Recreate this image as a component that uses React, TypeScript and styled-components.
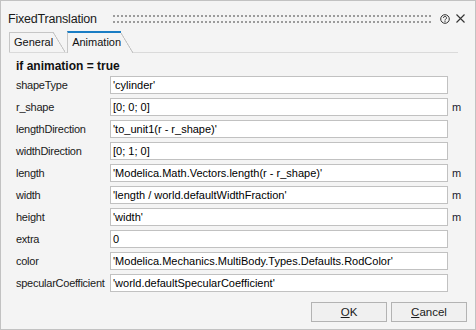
import React from 'react';
import styled, { createGlobalStyle } from 'styled-components';

const GlobalStyle = createGlobalStyle`
  html, body {
    margin: 0;
    padding: 0;
    background: #f4f4f4;
  }
  body {
    font-family: "Liberation Sans", Arial, sans-serif;
  }
`;

const PAGE_BG = '#f4f4f4';
const LINE = '#c6c6c6';

// Dialog frame
const Window = styled.div`
  width: 476px;
  height: 330px;
  box-sizing: border-box;
  border: 1px solid #c2c2c2;
  background: ${PAGE_BG};
  display: flex;
  flex-direction: column;
  color: #1a1a1a;
  font-family: "Liberation Sans", Arial, sans-serif;
`;

/* Title bar */
const TitleBar = styled.div`
  height: 30px;
  box-sizing: border-box;
  display: flex;
  align-items: flex-start;
  padding: 11px 10px 0 7px;
`;

const Title = styled.div`
  font-size: 12.5px;
  line-height: 14px;
  letter-spacing: -0.2px;
  white-space: nowrap;
`;

const Grip = styled.div`
  flex: 1;
  height: 8px;
  margin: 3px 9px 0 16px;
  background-image: conic-gradient(from 270deg at 2px 2px, #9c9c9c 25%, transparent 0);
  background-size: 4px 6px;
`;

const IconButton = styled.div<{ $gap?: number }>`
  display: flex;
  margin-top: 2px;
  margin-left: ${(p) => p.$gap ?? 0}px;
  color: #333;
`;

/* Tabs */
const TabStrip = styled.div`
  height: 21px;
  display: flex;
  align-items: flex-end;
  margin: 0 17px 0 8px;
  border-bottom: 1px solid #dadada;
`;

const Tab = styled.div<{ $active?: boolean }>`
  position: relative;
  box-sizing: border-box;
  height: ${(p) => (p.$active ? 22 : 20)}px;
  margin-bottom: ${(p) => (p.$active ? -1 : 0)}px;
  margin-right: 14px;
  padding: 0 0 ${(p) => (p.$active ? 1 : 0)}px 4px;
  display: flex;
  align-items: center;
  font-size: 11px;
  line-height: 13px;
  color: #111;
  background: ${PAGE_BG};
  border-left: 1px solid ${LINE};
  border-top: ${(p) => (p.$active ? '2px solid #1a7dc4' : `1px solid ${LINE}`)};

  &::after {
    content: '';
    position: absolute;
    left: 100%;
    top: ${(p) => (p.$active ? 0 : -1)}px;
    bottom: 0;
    width: 12px;
    background: linear-gradient(
      to bottom left,
      transparent calc(50% - 0.7px),
      ${LINE} calc(50% - 0.3px),
      ${LINE} calc(50% + 0.3px),
      ${PAGE_BG} calc(50% + 0.7px)
    );
  }
`;

/* Tab page */
const Page = styled.div`
  flex: 1;
  padding: 6px 0 0 15px;
`;

const Heading = styled.div`
  font-size: 12px;
  line-height: 14px;
  font-weight: bold;
  color: #111;
  margin-bottom: 3px;
`;

const Grid = styled.div`
  display: grid;
  grid-template-columns: 94px 338px auto;
  row-gap: 4px;
  align-items: center;
`;

const Label = styled.div`
  font-size: 11px;
  line-height: 18px;
  letter-spacing: -0.25px;
  white-space: nowrap;
`;

const Field = styled.input`
  height: 18px;
  box-sizing: border-box;
  margin: 0;
  padding: 0 2px;
  border: 1px solid #c1c1c1;
  border-radius: 0;
  background: #fff;
  font-family: "Liberation Sans", Arial, sans-serif;
  font-size: 11px;
  color: #000;
  outline: none;
`;

const Unit = styled.div`
  padding-left: 4px;
  font-size: 11px;
  line-height: 18px;
  color: #1a1a2e;
`;

/* Buttons */
const Footer = styled.div`
  display: flex;
  justify-content: flex-end;
  gap: 4px;
  padding: 0 8px 7px 0;
`;

const Button = styled.button`
  width: 76px;
  height: 20px;
  box-sizing: border-box;
  margin: 0;
  padding: 0;
  border: 1px solid #b3b3b3;
  background: #f0f0f0;
  font-family: "Liberation Sans", Arial, sans-serif;
  font-size: 11.5px;
  color: #1a1a1a;
`;

const HelpIcon = () => (
  <svg width="10" height="10" viewBox="0 0 10 10" fill="none" stroke="currentColor">
    <circle cx="5" cy="5" r="4.3" strokeWidth="1" />
    <path d="M3.5 3.9a1.5 1.5 0 1 1 2.2 1.3c-.5.3-.7.5-.7 1.1v.3" strokeWidth="1" />
    <circle cx="5" cy="7.6" r="0.6" fill="currentColor" stroke="none" />
  </svg>
);

const CloseIcon = () => (
  <svg width="9" height="9" viewBox="0 0 9 9" stroke="currentColor" strokeWidth="1.1">
    <path d="M0.5 0.5L8.5 8.5M8.5 0.5L0.5 8.5" />
  </svg>
);

const rows: { name: string; value: string; unit?: string }[] = [
  { name: 'shapeType', value: "'cylinder'" },
  { name: 'r_shape', value: '[0; 0; 0]', unit: 'm' },
  { name: 'lengthDirection', value: "'to_unit1(r - r_shape)'" },
  { name: 'widthDirection', value: '[0; 1; 0]' },
  { name: 'length', value: "'Modelica.Math.Vectors.length(r - r_shape)'", unit: 'm' },
  { name: 'width', value: "'length / world.defaultWidthFraction'", unit: 'm' },
  { name: 'height', value: "'width'", unit: 'm' },
  { name: 'extra', value: '0' },
  { name: 'color', value: "'Modelica.Mechanics.MultiBody.Types.Defaults.RodColor'" },
  { name: 'specularCoefficient', value: "'world.defaultSpecularCoefficient'" },
];

const App: React.FC = () => {
  return (
    <>
      <GlobalStyle />
      <Window>
        <TitleBar>
          <Title>FixedTranslation</Title>
          <Grip />
          <IconButton>
            <HelpIcon />
          </IconButton>
          <IconButton $gap={6}>
            <CloseIcon />
          </IconButton>
        </TitleBar>

        <TabStrip>
          <Tab>General</Tab>
          <Tab $active>Animation</Tab>
        </TabStrip>

        <Page>
          <Heading>if animation = true</Heading>
          <Grid>
            {rows.map((r) => (
              <React.Fragment key={r.name}>
                <Label>{r.name}</Label>
                <Field readOnly value={r.value} />
                <Unit>{r.unit ?? ''}</Unit>
              </React.Fragment>
            ))}
          </Grid>
        </Page>

        <Footer>
          <Button>
            <u>O</u>K
          </Button>
          <Button>
            <u>C</u>ancel
          </Button>
        </Footer>
      </Window>
    </>
  );
};

export default App;
